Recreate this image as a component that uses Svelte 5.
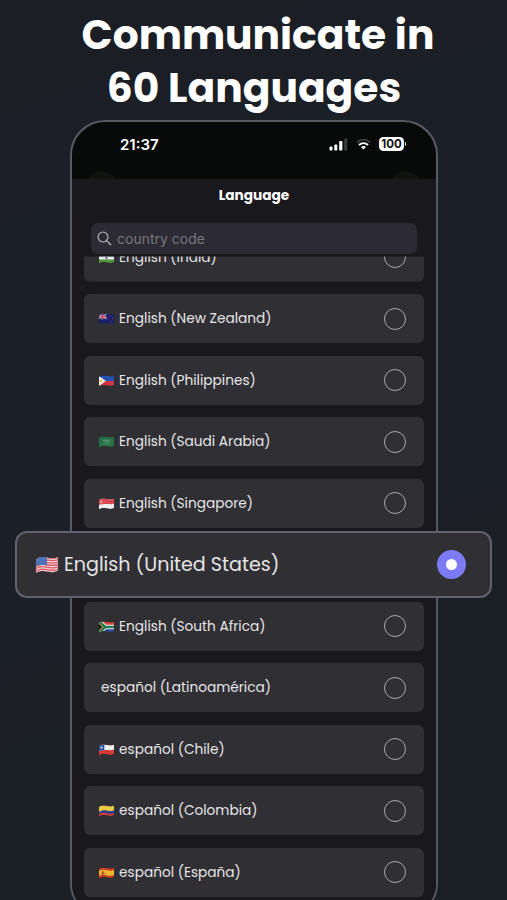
<script lang="ts">
	type Language = { flag?: string; name: string; selected?: boolean };

	const languages: Language[] = [
		{ flag: "in", name: "English (India)" },
		{ flag: "nz", name: "English (New Zealand)" },
		{ flag: "ph", name: "English (Philippines)" },
		{ flag: "sa", name: "English (Saudi Arabia)" },
		{ flag: "sg", name: "English (Singapore)" },
		{ flag: "us", name: "English (United States)", selected: true },
		{ flag: "za", name: "English (South Africa)" },
		{ name: "español (Latinoamérica)" },
		{ flag: "cl", name: "español (Chile)" },
		{ flag: "co", name: "español (Colombia)" },
		{ flag: "es", name: "español (España)" },
	];
</script>

{#snippet flagIcon(code: string)}
	<svg class="flag" viewBox="0 0 30 22">
		<defs>
			<clipPath id="wave-{code}">
				<path d="M1 4C7 0 11 1 16 2S25 3 29 1V18C24 21 20 20 15 19S6 18 1 21Z" />
			</clipPath>
		</defs>
		<g clip-path="url(#wave-{code})">
			{#if code === "in"}
				<path fill="#e8a45c" d="M0 0h30v8H0z" />
				<path fill="#e9eee6" d="M0 8h30v6H0z" />
				<path fill="#4f9a35" d="M0 14h30v8H0z" />
				<circle cx="15" cy="11" r="2" fill="#37508f" />
			{:else if code === "nz"}
				<path fill="#16206b" d="M0 0h30v22H0z" />
				<path stroke="#b9a5c4" stroke-width="2" d="M0 2l15 9M0 11l15-9" />
				<path stroke="#d0bfd2" stroke-width="3" d="M7.5 0v12M0 7h15" />
				<path stroke="#c8324c" stroke-width="2" d="M7.5 0v12M0 7h15" />
				<path fill="#a03560" d="M21 5h2v2h-2zM25 9h2v2h-2zM18 10h2v2h-2zM22 15h2v2h-2z" />
			{:else if code === "ph"}
				<path fill="#2450b5" d="M0 0h30v11H0z" />
				<path fill="#cc3541" d="M0 11h30v11H0z" />
				<path fill="#f2eee5" d="M0 1l14 10L0 21z" />
				<circle cx="5" cy="11" r="2.3" fill="#edba3f" />
			{:else if code === "sa"}
				<path fill="#257044" d="M0 0h30v22H0z" />
				<path fill="none" stroke="#6fa582" stroke-width="1.2" d="M8 7l3 2 2-3 2 3 3-2 4 2M9 10h12M9 14h12" />
			{:else if code === "sg"}
				<path fill="#eee" d="M0 0h30v22H0z" />
				<path fill="#d94750" d="M0 0h30v10C24 12 20 11 15 11S6 11 0 13z" />
				<circle cx="7" cy="6.5" r="3" fill="#f2dede" />
				<circle cx="8.5" cy="6.5" r="2.7" fill="#d94750" />
			{:else if code === "us"}
				<path fill="#eed5d8" d="M0 0h30v22H0z" />
				<g fill="none" stroke="#db5965" stroke-width="1.6">
					<path d="M0 4C7 0 11 1 16 2S25 3 30 1" />
					<path d="M0 7C7 3 11 4 16 5S25 6 30 4" />
					<path d="M0 10C7 6 11 7 16 8S25 9 30 7" />
					<path d="M0 13C7 9 11 10 16 11S25 12 30 10" />
					<path d="M0 16C7 12 11 13 16 14S25 15 30 13" />
					<path d="M0 19C7 15 11 16 16 17S25 18 30 16" />
					<path d="M0 22C7 18 11 19 16 20S25 21 30 19" />
				</g>
				<path fill="#4770b5" d="M0 0h15v11.5C9 10 6 11 0 13z" />
				<path stroke="#7d9bcb" stroke-width=".8" stroke-dasharray="1 2" d="M2 4.5h12M3.5 7h11M2 9.5h12" />
			{:else if code === "za"}
				<path fill="#d8463f" d="M0 0h30v11H0z" />
				<path fill="#2b489f" d="M0 11h30v11H0z" />
				<path fill="none" stroke="#eee" stroke-width="8" d="M0 0l13 11L0 22M13 11h17" />
				<path fill="none" stroke="#e1b23b" stroke-width="7" d="M-2 0l12 11-12 11" />
				<path fill="none" stroke="#24784f" stroke-width="4.5" d="M0 0l13 11L0 22M13 11h17" />
				<path fill="#111" d="M0 4l7 7-7 7z" />
			{:else if code === "cl"}
				<path fill="#d23a35" d="M0 0h30v22H0z" />
				<path fill="#eee" d="M0 0h30v10C24 12 20 11 15 11S6 11 0 13z" />
				<path fill="#2650a0" d="M0 0h11v11L0 13z" />
				<circle cx="6" cy="6.5" r="2" fill="#eee" />
			{:else if code === "co"}
				<path fill="#c93d3c" d="M0 0h30v22H0z" />
				<path fill="#303e91" d="M0 0h30v14C24 17 20 16 15 15S6 14 0 17z" />
				<path fill="#eacb41" d="M0 0h30v9C24 12 20 11 15 10S6 10 0 13z" />
			{:else if code === "es"}
				<path fill="#c53a27" d="M0 0h30v22H0z" />
				<path fill="#eeb62e" d="M0 8C7 4 11 5 16 6S25 7 30 5V14C24 17 20 16 15 15S6 14 0 17z" />
				<path fill="#b75a36" d="M6 8h5v6H6z" />
			{/if}
		</g>
	</svg>
{/snippet}

<div class="poster">
	<h1>Communicate in<br /><span class="second">60 Languages</span></h1>

	<div class="phone">
		<div class="status">
			<span class="time">21:37</span>
			<div class="indicators">
				<svg class="signal" viewBox="0 0 19 13">
					<g fill="#fff">
						<rect x="0.5" y="8.5" width="3" height="4" rx="1" />
						<rect x="5.3" y="6.5" width="3" height="6" rx="1" />
						<rect x="10.2" y="3" width="3.2" height="9.5" rx="1" />
					</g>
					<rect x="15.2" y="0.5" width="3" height="12" rx="1" fill="#3d3e3d" />
				</svg>
				<svg class="wifi" viewBox="0 0 16 12" fill="none">
					<path stroke="#414241" stroke-width="2" d="M1 4.3C5 .4 11 .4 15 4.3" />
					<path stroke="#fff" stroke-width="2.2" d="M3.2 7C6 4.6 10 4.6 12.8 7" />
					<path fill="#fff" d="M5.4 9.2Q8 7.3 10.6 9.2L8 11.8Z" />
				</svg>
				<div class="battery">100</div>
			</div>
			<i class="bump left"></i>
			<i class="bump right"></i>
		</div>

		<div class="sheet">
			<div class="title">Language</div>
			<div class="search">
				<svg viewBox="0 0 16 16" fill="none" stroke="#a2a1a8" stroke-linecap="round">
					<circle cx="6.4" cy="6.4" r="5.2" stroke-width="1.5" />
					<path stroke-width="1.7" d="M10.4 10.4L14.5 14.5" />
				</svg>
				<span>country code</span>
			</div>
			<div class="list">
				{#each languages as language}
					<div class="row" class:selected={language.selected}>
						{#if language.flag}
							{@render flagIcon(language.flag)}
						{/if}
						<span class="name" class:bare={!language.flag}>{language.name}</span>
						<span class="radio"></span>
					</div>
				{/each}
			</div>
		</div>
	</div>
</div>

<style>
	:global(body) {
		background: #1b1f24;
	}
	.poster {
		box-sizing: border-box;
		width: 507px;
		height: 900px;
		padding-top: 8px;
		overflow: hidden;
		color: #fff;
		font-family: Poppins, Inter, sans-serif;
		background: linear-gradient(160deg, #1b1f24 0%, #1b1f28 45%, #1b2024 75%);
	}
	h1 {
		height: 112px;
		margin: 0 0 0 9px;
		font-size: 40.8px;
		line-height: 53px;
		font-weight: 700;
		text-align: center;
		white-space: nowrap;
	}
	.second {
		margin-right: 8px;
	}
	.phone {
		box-sizing: border-box;
		width: 368px;
		height: 798px;
		margin-left: 70px;
		border: 2px solid #585963;
		border-radius: 35px;
		background: #080a09;
	}
	.status {
		position: relative;
		display: flex;
		height: 57px;
		padding: 0 32px 0 48px;
		justify-content: space-between;
		overflow: hidden;
	}
	.time {
		padding-top: 13px;
		font-family: Inter, sans-serif;
		font-size: 15px;
		line-height: 20px;
		font-weight: 600;
	}
	.indicators {
		display: flex;
		height: 14px;
		padding-top: 15px;
		gap: 8px;
		align-items: center;
	}
	.signal {
		width: 19px;
		height: 13px;
	}
	.wifi {
		width: 15px;
		height: 12px;
	}
	.battery {
		position: relative;
		width: 25px;
		height: 14px;
		border-radius: 4.5px;
		background: #fff;
		color: #111;
		font: 700 11.5px/14px Inter, sans-serif;
		text-align: center;
	}
	.battery::after {
		content: "";
		position: absolute;
		top: 5px;
		right: -2px;
		width: 1.5px;
		height: 4px;
		border-radius: 0 2px 2px 0;
		background: #ddd;
	}
	.bump {
		position: absolute;
		top: 49px;
		width: 32px;
		height: 32px;
		border-radius: 50%;
		background: #10130f;
	}
	.left {
		left: 14px;
	}
	.right {
		right: 14px;
	}
	.sheet {
		box-sizing: border-box;
		height: 737px;
		padding: 6px 12px 0;
		border-radius: 0 0 33px 33px;
		background: #19181d;
	}
	.title {
		height: 38px;
		font-size: 13.7px;
		line-height: 21px;
		font-weight: 700;
		text-align: center;
	}
	.search {
		display: flex;
		box-sizing: border-box;
		height: 31px;
		margin: 0 7px;
		padding-left: 6px;
		align-items: center;
		gap: 5px;
		border-radius: 7px;
		background: #2c2a33;
		color: #77767e;
		font-family: Inter, sans-serif;
		font-size: 14px;
	}
	.search svg {
		width: 15px;
		height: 15px;
	}
	.list {
		display: flex;
		height: 657px;
		margin-top: 2.5px;
		flex-direction: column;
		gap: 12.5px;
	}
	.row {
		display: flex;
		box-sizing: border-box;
		height: 49px;
		padding: 0 18px 0 14px;
		flex: none;
		align-items: center;
		border-radius: 6px;
		background: #302f34;
	}
	/* the first row is scrolled halfway under the search field */
	.row:first-child {
		margin-top: -24px;
		clip-path: inset(24px 0 0 0);
	}
	.flag {
		width: 17px;
		height: 12px;
		margin: 1px 4px 0 0;
		flex: none;
	}
	.name {
		padding-top: 1px;
		flex: 1;
		color: #e5e5e6;
		font-size: 13.7px;
		white-space: nowrap;
	}
	.bare {
		margin-left: 3px;
	}
	.radio {
		box-sizing: border-box;
		width: 22px;
		height: 22px;
		border: 1.5px solid #aaa9ad;
		border-radius: 50%;
	}
	.selected {
		position: relative;
		height: 67px;
		margin: -9px -68px -9px -69px;
		padding: 0 24px 0 18px;
		border: 2px solid #62616d;
		border-radius: 12px;
	}
	.selected .flag {
		width: 24px;
		height: 18px;
		margin: 0 5px 0 0;
	}
	.selected .name {
		padding-top: 0;
		font-size: 19.1px;
	}
	.selected .radio {
		width: 29px;
		height: 29px;
		border: 9.5px solid #7c7bf3;
		background: #fff;
	}
</style>
